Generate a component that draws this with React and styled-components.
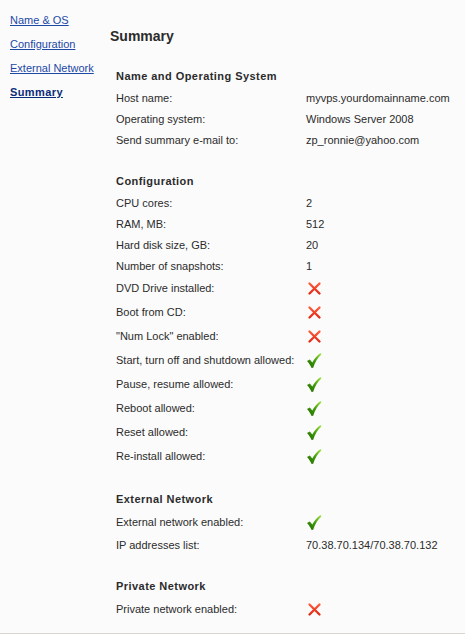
import React from 'react'
import styled, { createGlobalStyle } from 'styled-components'

const GlobalStyle = createGlobalStyle`
  html, body {
    margin: 0;
    padding: 0;
    background: #ffffff;
  }
  body {
    font-family: "Liberation Sans", Arial, sans-serif;
    font-size: 11px;
    color: #2b2b2b;
  }
`;

const Page = styled.div`
  display: flex;
  height: 633px;
  background: #fbfbfb;
  border-bottom: 1px solid #d8d5cf;
`;

const Sidebar = styled.nav`
  width: 100px;
  padding: 12px 0 0 10px;
  box-sizing: border-box;
  display: flex;
  flex-direction: column;
  gap: 8px;
`;

const NavLink = styled.a`
  display: block;
  line-height: 16px;
  color: ${({ active }) => (active ? '#0a2a7a' : '#1c49a6')};
  font-weight: ${({ active }) => (active ? 'bold' : 'normal')};
  letter-spacing: ${({ active }) => (active ? '0.4px' : '0')};
  text-decoration: underline;
  cursor: pointer;
  white-space: nowrap;
`;

const Main = styled.main`
  flex: 1;
  padding: 27px 0 0 10px;
`;

const Title = styled.h1`
  margin: 0;
  font-size: 14px;
  line-height: 18px;
  font-weight: bold;
  color: #2b2b2b;
`;

const Section = styled.section`
  margin-top: 21px;
  padding-left: 6px;
`;

const Heading = styled.div`
  height: 21px;
  line-height: 21px;
  font-weight: bold;
  letter-spacing: 0.45px;
  color: #2b2b2b;
`;

const Row = styled.div`
  display: grid;
  grid-template-columns: 190px 1fr;
  align-items: center;
  height: ${({ icon }) => (icon ? '24px' : '21px')};
`;

const Label = styled.span`
  white-space: nowrap;
`;

const Value = styled.span`
  white-space: nowrap;
  display: flex;
  align-items: center;
`;

const Cross = () => (
  <svg width="15" height="15" viewBox="0 0 15 15" style={{ marginLeft: 1 }}>
    <defs>
      <linearGradient id="xg" x1="0" y1="0" x2="0" y2="1">
        <stop offset="0" stopColor="#ff5a3c" />
        <stop offset="1" stopColor="#e02a14" />
      </linearGradient>
    </defs>
    <path d="M2.5 2.5 L12.5 12.5 M12.5 2.5 L2.5 12.5" stroke="url(#xg)" strokeWidth="2.3" strokeLinecap="round" fill="none" />
  </svg>
);

const Check = () => (
  <svg width="16" height="17" viewBox="0 0 16 17">
    <defs>
      <linearGradient id="cg" x1="0" y1="1" x2="1" y2="0">
        <stop offset="0" stopColor="#1f6a00" />
        <stop offset="0.5" stopColor="#3f9a0a" />
        <stop offset="1" stopColor="#a6e83e" />
      </linearGradient>
    </defs>
    <path d="M1 9 L3.8 7.4 L6.3 10.4 C8.2 7 10.8 3.8 14.4 1 L15.4 2.6 C11.8 5.8 9.2 9.8 7.2 15.8 L5.6 16 C4.4 13.2 2.8 11 1 9 Z" fill="url(#cg)" />
  </svg>
);

const sections = [
  {
    title: 'Name and Operating System',
    rows: [
      ['Host name:', 'myvps.yourdomainname.com'],
      ['Operating system:', 'Windows Server 2008'],
      ['Send summary e-mail to:', 'zp_ronnie@yahoo.com'],
    ],
  },
  {
    title: 'Configuration',
    rows: [
      ['CPU cores:', '2'],
      ['RAM, MB:', '512'],
      ['Hard disk size, GB:', '20'],
      ['Number of snapshots:', '1'],
      ['DVD Drive installed:', false],
      ['Boot from CD:', false],
      ['"Num Lock" enabled:', false],
      ['Start, turn off and shutdown allowed:', true],
      ['Pause, resume allowed:', true],
      ['Reboot allowed:', true],
      ['Reset allowed:', true],
      ['Re-install allowed:', true],
    ],
  },
  {
    title: 'External Network',
    rows: [
      ['External network enabled:', true],
      ['IP addresses list:', '70.38.70.134/70.38.70.132'],
    ],
  },
  {
    title: 'Private Network',
    rows: [['Private network enabled:', false]],
  },
];

const links = ['Name & OS', 'Configuration', 'External Network', 'Summary'];

const App = () => {
  return (
    <>
      <GlobalStyle />
      <Page>
        <Sidebar>
          {links.map((l) => (
            <NavLink key={l} active={l === 'Summary'}>{l}</NavLink>
          ))}
        </Sidebar>
        <Main>
          <Title>Summary</Title>
          {sections.map((s) => (
            <Section key={s.title}>
              <Heading>{s.title}</Heading>
              {s.rows.map(([label, value]) => {
                const isIcon = typeof value === 'boolean';
                return (
                  <Row key={label} icon={isIcon}>
                    <Label>{label}</Label>
                    <Value>{isIcon ? (value ? <Check /> : <Cross />) : value}</Value>
                  </Row>
                );
              })}
            </Section>
          ))}
        </Main>
      </Page>
    </>
  );
};

export default App
